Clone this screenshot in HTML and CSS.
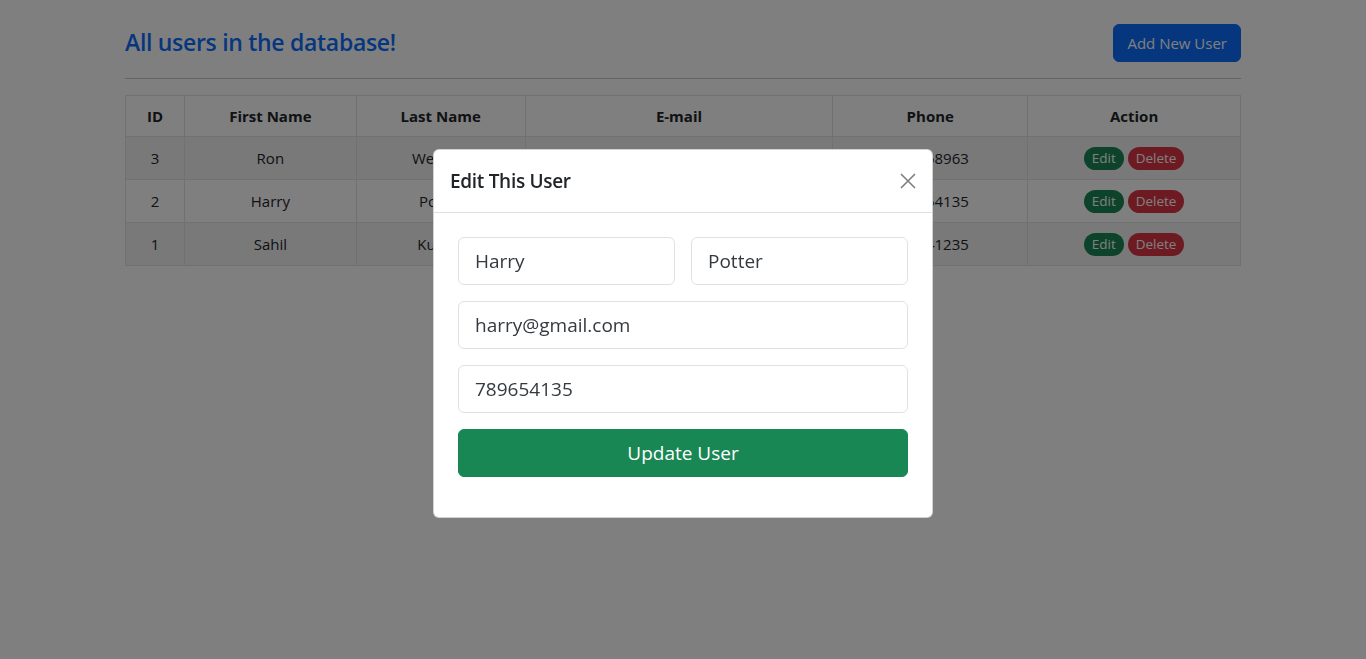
FILE: index.html
```html
<!DOCTYPE html>
<html lang="en">
<head>
<meta charset="utf-8">
<title>Users</title>
<link rel="stylesheet" href="styles.css">
</head>
<body>
<div class="container">
  <div class="topbar">
    <h4 class="title">All users in the database!</h4>
    <button class="btn btn-primary">Add New User</button>
  </div>
  <hr class="divider">
  <table class="users">
    <colgroup>
      <col class="c-id"><col class="c-first"><col class="c-last"><col class="c-mail"><col class="c-phone"><col class="c-action">
    </colgroup>
    <thead>
      <tr><th>ID</th><th>First Name</th><th>Last Name</th><th>E-mail</th><th>Phone</th><th>Action</th></tr>
    </thead>
    <tbody>
      <tr class="odd"><td>3</td><td>Ron</td><td>Weasley</td><td>ron@gmail.com</td><td>789658963</td><td><span class="pill edit">Edit</span> <span class="pill del">Delete</span></td></tr>
      <tr><td>2</td><td>Harry</td><td>Potter</td><td>harry@gmail.com</td><td>789654135</td><td><span class="pill edit">Edit</span> <span class="pill del">Delete</span></td></tr>
      <tr class="odd"><td>1</td><td>Sahil</td><td>Kumar</td><td>sahil@gmail.com</td><td>789641235</td><td><span class="pill edit">Edit</span> <span class="pill del">Delete</span></td></tr>
    </tbody>
  </table>
</div>

<div class="backdrop"></div>
<div class="modal">
  <div class="modal-header">
    <h5 class="modal-title">Edit This User</h5>
    <button class="btn-close" aria-label="Close">
      <svg viewBox="0 0 16 16" width="16" height="16"><path d="M1 1L15 15M15 1L1 15" stroke="#000" stroke-width="1.6" fill="none"/></svg>
    </button>
  </div>
  <div class="modal-body">
    <div class="row2">
      <input class="field" value="Harry">
      <input class="field" value="Potter">
    </div>
    <input class="field" value="harry@gmail.com">
    <input class="field" value="789654135">
    <button class="btn-update">Update User</button>
  </div>
</div>
</body>
</html>
```
FILE: styles.css
```css
* { box-sizing: border-box; }
html, body { margin: 0; height: 100%; }
body {
  font-family: "Open Sans", "Noto Sans", sans-serif;
  font-size: 16px;
  line-height: 1.5;
  color: #212529;
  background: #fff;
}
.container {
  width: 1140px;
  margin: 0 auto;
  padding: 24px 12px 0;
}
.topbar {
  display: flex;
  justify-content: space-between;
  align-items: center;
}
.title {
  margin: 0;
  font-size: 23px;
  font-weight: 600;
  line-height: 1.2;
  color: #0d6efd;
  letter-spacing: -0.3px;
}
.btn {
  font-family: inherit;
  font-size: 15px;
  line-height: 24px;
  padding: 6px 13px;
  border: 1px solid transparent;
  border-radius: 6px;
  cursor: pointer;
}
.btn-primary { background: #0d6efd; border-color: #0d6efd; color: #fff; }
.divider {
  margin: 16px 0;
  border: 0;
  border-top: 1px solid #212529;
  opacity: .25;
}
.users {
  width: 100%;
  border-collapse: collapse;
  border: 1px solid #dee2e6;
}
.c-id { width: 59px; }
.c-first { width: 172px; }
.c-last { width: 169px; }
.c-mail { width: 308px; }
.c-phone { width: 195px; }
.c-action { width: 213px; }
.users th, .users td {
  border: 1px solid #dee2e6;
  padding: 8px;
  text-align: center;
  font-size: 15px;
  height: 43px;
}
.users th { font-weight: 700; height: 41px; }
.users tr.odd td { background: rgba(0,0,0,.05); }
.pill {
  display: inline-block;
  font-size: 13.5px;
  line-height: 23px;
  padding: 0 8px;
  border-radius: 12px;
  color: #fff;
  vertical-align: middle;
}
.pill.edit { background: #198754; }
.pill.del { background: #dc3545; }
.backdrop {
  position: fixed;
  inset: 0;
  background: rgba(0,0,0,.5);
}
.modal {
  position: fixed;
  top: 149px;
  left: 433px;
  width: 500px;
  background: #fff;
  border: 1px solid rgba(0,0,0,.175);
  border-radius: 6px;
}
.modal-header {
  display: flex;
  align-items: center;
  justify-content: space-between;
  padding: 16px;
  border-bottom: 1px solid #dee2e6;
}
.modal-title {
  margin: 0;
  font-size: 19px;
  font-weight: 600;
  line-height: 30px;
  letter-spacing: -0.3px;
}
.btn-close {
  width: 32px;
  height: 32px;
  padding: 8px;
  margin: -8px -8px -8px auto;
  border: 0;
  background: transparent;
  opacity: .5;
  display: flex;
  align-items: center;
  justify-content: center;
}
.modal-body {
  padding: 24px 24px 40px;
  display: flex;
  flex-direction: column;
  gap: 16px;
}
.row2 {
  display: flex;
  gap: 16px;
}
.row2 .field { flex: 1; min-width: 0; }
.field {
  display: block;
  width: 100%;
  font-family: inherit;
  font-size: 19px;
  line-height: 30px;
  padding: 8px 16px;
  color: #343a40;
  border: 1px solid #dee2e6;
  border-radius: 6px;
  outline: none;
}
.btn-update {
  width: 100%;
  font-family: inherit;
  font-size: 19px;
  line-height: 30px;
  padding: 8px 16px;
  color: #fff;
  background: #198754;
  border: 1px solid #198754;
  border-radius: 6px;
}
```
